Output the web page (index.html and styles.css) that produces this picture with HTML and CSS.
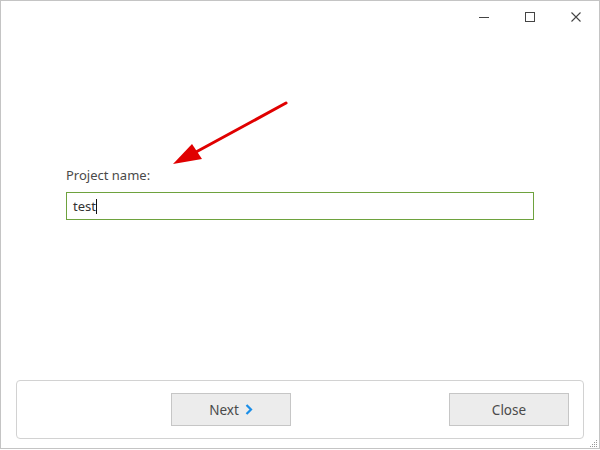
FILE: index.html
```html
<!DOCTYPE html>
<html>
<head>
<meta charset="utf-8">
<link rel="stylesheet" href="styles.css">
</head>
<body>
<div class="window">
  <div class="titlebar">
    <div class="ctl"><svg width="12" height="12" viewBox="0 0 12 12"><line x1="1" y1="6.5" x2="11" y2="6.5" stroke="#444" stroke-width="1"/></svg></div>
    <div class="ctl"><svg width="12" height="12" viewBox="0 0 12 12"><rect x="1.5" y="1.5" width="9" height="9" fill="none" stroke="#444" stroke-width="1"/></svg></div>
    <div class="ctl"><svg width="12" height="12" viewBox="0 0 12 12"><path d="M1.5 1.5 L10.5 10.5 M10.5 1.5 L1.5 10.5" stroke="#444" stroke-width="1.1" fill="none"/></svg></div>
  </div>
  <div class="content">
    <div class="label">Project name:</div>
    <div class="field"><span class="value">test</span><span class="caret"></span></div>
  </div>
  <div class="panel">
    <button class="btn next">Next <svg class="chev" width="8" height="11" viewBox="0 0 8 11"><path d="M1.5 1 L6 5.5 L1.5 10" stroke="#1a8ee8" stroke-width="2.2" fill="none"/></svg></button>
    <button class="btn close">Close</button>
  </div>
  <svg class="arrow" width="600" height="450" viewBox="0 0 600 450">
    <line x1="286" y1="103" x2="196" y2="152" stroke="#e00000" stroke-width="3" stroke-linecap="round"/>
    <polygon points="173,164 192,144 202,159" fill="#e00000"/>
  </svg>
  <svg class="grip" width="8" height="8" viewBox="0 0 8 8">
    <rect x="6" y="0" width="1" height="1" fill="#999"/>
    <rect x="6" y="2" width="1" height="1" fill="#999"/>
    <rect x="4" y="2" width="1" height="1" fill="#999"/>
    <rect x="6" y="4" width="1" height="1" fill="#999"/>
    <rect x="4" y="4" width="1" height="1" fill="#999"/>
    <rect x="2" y="4" width="1" height="1" fill="#999"/>
    <rect x="6" y="6" width="1" height="1" fill="#999"/>
    <rect x="4" y="6" width="1" height="1" fill="#999"/>
    <rect x="2" y="6" width="1" height="1" fill="#999"/>
    <rect x="0" y="6" width="1" height="1" fill="#999"/>
  </svg>
</div>
</body>
</html>
```

FILE: styles.css
```css
html, body {
  margin: 0;
  padding: 0;
  background: #ffffff;
}
body {
  font-family: "Noto Sans", "Open Sans", sans-serif;
  font-size: 13px;
  color: #4a4a4a;
}
.window {
  position: relative;
  width: 600px;
  height: 449px;
  box-sizing: border-box;
  border: 1px solid #c4c4c4;
  background: #fff;
  display: flex;
  flex-direction: column;
}
.titlebar {
  height: 32px;
  display: flex;
  justify-content: flex-end;
}
.ctl {
  width: 46px;
  height: 32px;
  display: flex;
  align-items: center;
  justify-content: center;
}
.content {
  padding: 133px 0 0 65px;
}
.label {
  line-height: 18px;
  height: 18px;
  margin-bottom: 8px;
}
.field {
  width: 468px;
  height: 28px;
  box-sizing: border-box;
  border: 1px solid #6ea23e;
  display: flex;
  align-items: center;
  padding-left: 6px;
  font-size: 13px;
  color: #333;
}
.caret {
  display: inline-block;
  width: 1px;
  height: 15px;
  background: #111;
  margin-left: 0;
}
.panel {
  margin: auto 15px 9px 15px;
  height: 59px;
  box-sizing: border-box;
  border: 1px solid #d2d2d2;
  border-radius: 4px;
  display: flex;
  align-items: center;
  padding: 0 14px 0 154px;
}
.btn {
  width: 120px;
  height: 33px;
  box-sizing: border-box;
  border: 1px solid #c6c6c6;
  background: #ececec;
  font-family: "Noto Sans", "Open Sans", sans-serif;
  font-size: 13.5px;
  color: #4a4a4a;
  padding: 0;
  display: flex;
  align-items: center;
  justify-content: center;
}
.chev {
  margin-left: 6px;
}
.close {
  margin-left: auto;
}
.arrow {
  position: absolute;
  left: -1px;
  top: -1px;
  pointer-events: none;
}
.grip {
  position: absolute;
  right: 1px;
  bottom: 0px;
}
```
